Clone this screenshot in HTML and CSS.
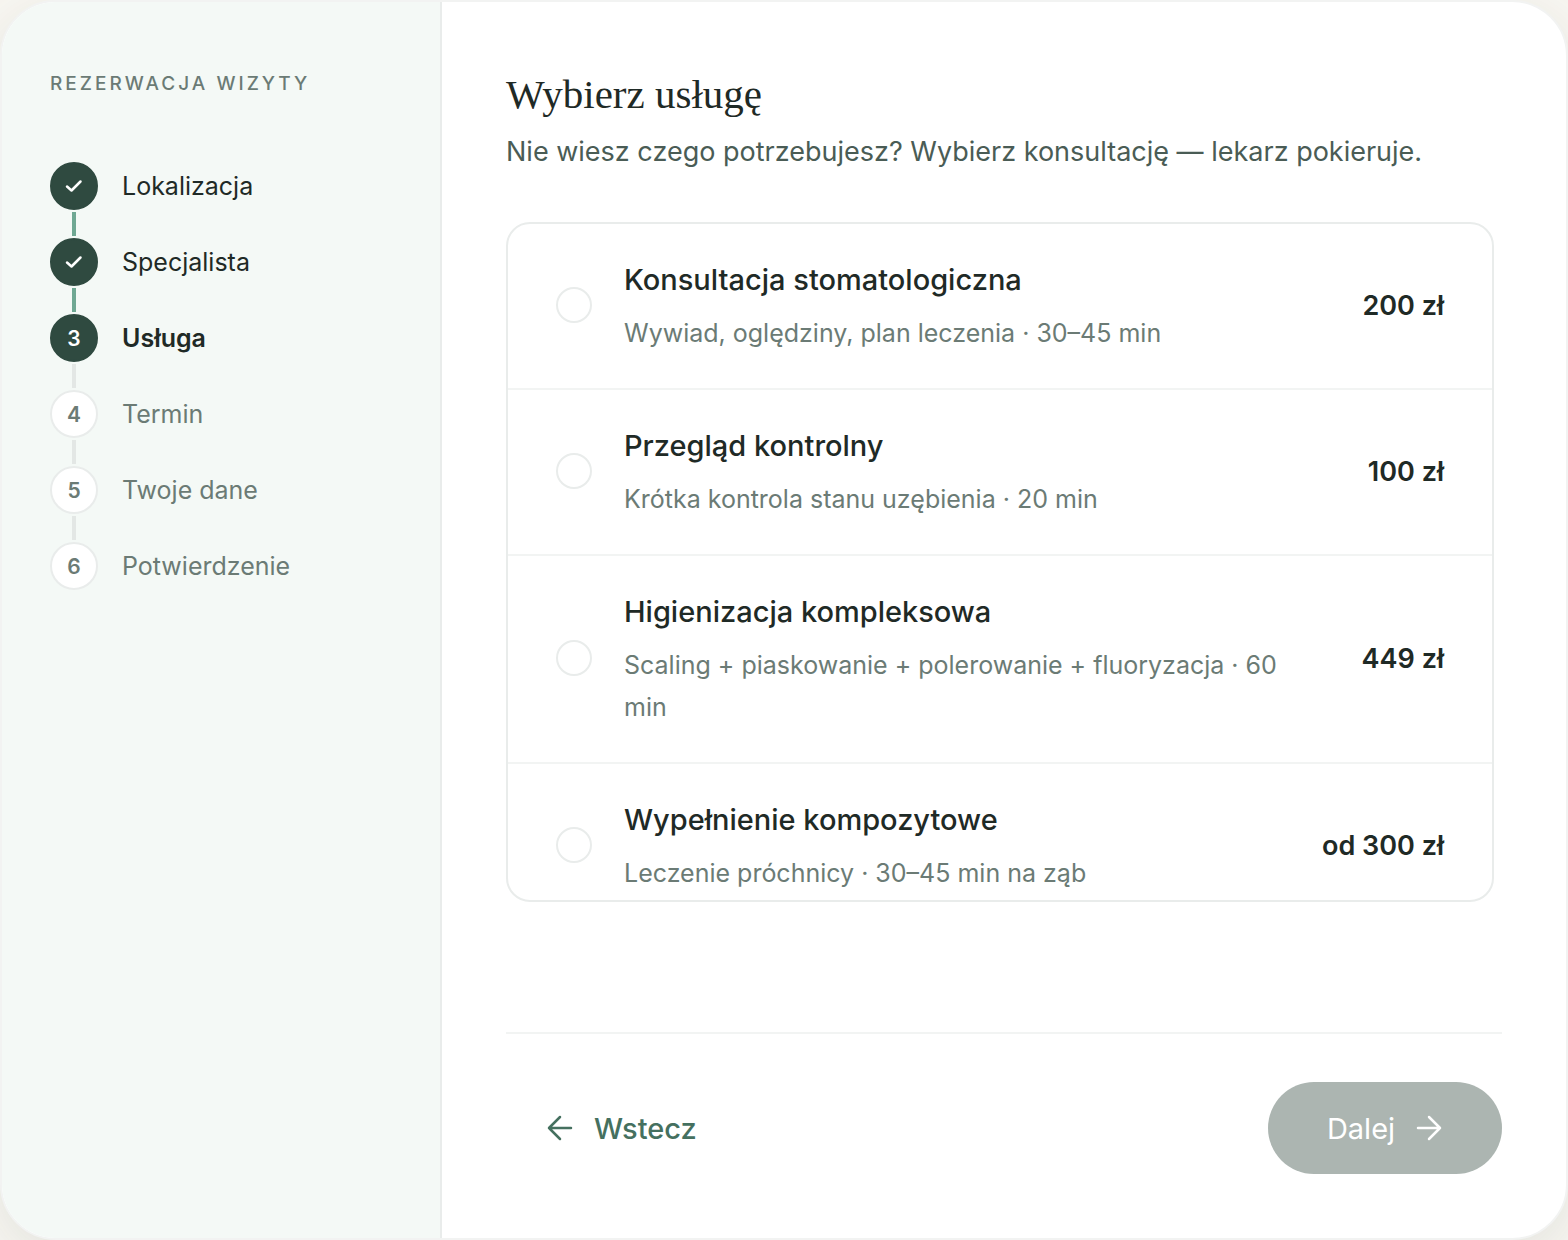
FILE: index.html
```html
<!DOCTYPE html>
<html lang="pl">
  <head>
    <meta charset="UTF-8" />
    <meta name="viewport" content="width=device-width, initial-scale=1.0" />
    <title>Rezerwacja wizyty</title>
    <link rel="stylesheet" href="styles.css">
  </head>
  <body>
    <div class="booking">
      <aside class="sidebar">
        <h1>Rezerwacja wizyty</h1>
        <ol class="steps">
          <li class="step done">
            <span class="dot">
              <svg width="24" height="24" viewBox="0 0 24 24"><path d="M5 12.5 9.5 16.5 18.5 7.5" /></svg>
            </span>
            <span class="label">Lokalizacja</span>
          </li>
          <li class="step done">
            <span class="dot">
              <svg width="24" height="24" viewBox="0 0 24 24"><path d="M5 12.5 9.5 16.5 18.5 7.5" /></svg>
            </span>
            <span class="label">Specjalista</span>
          </li>
          <li class="step active">
            <span class="dot">3</span>
            <span class="label">Usługa</span>
          </li>
          <li class="step">
            <span class="dot">4</span>
            <span class="label">Termin</span>
          </li>
          <li class="step">
            <span class="dot">5</span>
            <span class="label">Twoje dane</span>
          </li>
          <li class="step">
            <span class="dot">6</span>
            <span class="label">Potwierdzenie</span>
          </li>
        </ol>
      </aside>
      <form class="main">
        <h2>Wybierz usługę</h2>
        <p class="lead">Nie wiesz czego potrzebujesz? Wybierz konsultację — lekarz pokieruje.</p>
        <div class="services">
          <label class="service">
            <input type="radio" name="service" value="konsultacja" />
            <span class="info">
              <span class="name">Konsultacja stomatologiczna</span>
              <span class="desc">Wywiad, oględziny, plan leczenia · 30–45 min</span>
            </span>
            <span class="price">200 zł</span>
          </label>
          <label class="service">
            <input type="radio" name="service" value="przeglad" />
            <span class="info">
              <span class="name">Przegląd kontrolny</span>
              <span class="desc">Krótka kontrola stanu uzębienia · 20 min</span>
            </span>
            <span class="price">100 zł</span>
          </label>
          <label class="service">
            <input type="radio" name="service" value="higienizacja" />
            <span class="info">
              <span class="name">Higienizacja kompleksowa</span>
              <span class="desc">Scaling + piaskowanie + polerowanie + fluoryzacja · 60 min</span>
            </span>
            <span class="price">449 zł</span>
          </label>
          <label class="service">
            <input type="radio" name="service" value="wypelnienie" />
            <span class="info">
              <span class="name">Wypełnienie kompozytowe</span>
              <span class="desc">Leczenie próchnicy · 30–45 min na ząb</span>
            </span>
            <span class="price">od 300 zł</span>
          </label>
        </div>
        <div class="actions">
          <button type="button" class="back">
            <svg width="28" height="28" viewBox="0 0 28 28"><path d="M25 14H3M14 3 3 14 14 25" /></svg>
            Wstecz
          </button>
          <button type="submit" class="next" disabled>
            Dalej
            <svg width="28" height="28" viewBox="0 0 28 28"><path d="M3 14H25M14 3 25 14 14 25" /></svg>
          </button>
        </div>
      </form>
    </div>
  </body>
</html>
```
FILE: styles.css
```css
* {
  margin: 0;
  padding: 0;
  box-sizing: border-box;
}
body {
  background-color: #f9f7f2;
  font-family: Inter, "Liberation Sans", sans-serif;
  font-size: 25px;
  color: #1f2a26;
}
.booking {
  display: flex;
  min-height: 100vh;
  border: 2px solid #f2f3f2;
  border-radius: 56px;
  background-color: #fff;
  overflow: hidden;
  box-shadow: 0 16px 64px rgba(47, 74, 64, 0.12);
}
svg {
  fill: none;
  stroke: currentColor;
  stroke-width: 2.5;
  stroke-linecap: round;
  stroke-linejoin: round;
}

/* sidebar */
.sidebar {
  flex: none;
  width: 440px;
  padding: 64px 48px;
  border-right: 2px solid #e9eceb;
  background-color: #f4f9f6;
}
.sidebar h1 {
  margin-bottom: 60px;
  font-size: 19px;
  font-weight: 500;
  line-height: 36px;
  letter-spacing: 3px;
  text-transform: uppercase;
  color: #6b7b75;
}
.steps {
  list-style: none;
}
.step {
  position: relative;
  display: flex;
  align-items: center;
  gap: 24px;
  margin-bottom: 28px;
  color: #6b7b75;
}
/* line to the next step */
.step:not(:last-child)::after {
  content: "";
  position: absolute;
  top: 50px;
  left: 22px;
  width: 4px;
  height: 24px;
  background-color: #e3e7e5;
}
.step.done::after {
  background-color: #6fa893;
}
.dot {
  display: flex;
  align-items: center;
  justify-content: center;
  width: 48px;
  height: 48px;
  border: 2px solid #e9eceb;
  border-radius: 50%;
  background-color: #fff;
  font-size: 21px;
  font-weight: 600;
}
.done .dot,
.active .dot {
  border-color: #2f4a40;
  background-color: #2f4a40;
  color: #fff;
}
.done,
.active {
  color: #1f2a26;
}
.active .label {
  font-weight: 600;
}

/* service picker */
.main {
  flex: 1;
  display: flex;
  flex-direction: column;
  min-width: 0;
  padding: 64px;
}
h2 {
  margin-bottom: 8px;
  font-family: "Liberation Serif", serif;
  font-size: 41px;
  font-weight: 400;
  line-height: 56px;
}
.lead {
  margin-bottom: 48px;
  font-size: 27px;
  line-height: 44px;
  color: #4a5c55;
}
.services {
  max-height: 680px;
  margin-right: 8px;
  border: 2px solid #e9eceb;
  border-radius: 24px;
  overflow-y: auto;
  scrollbar-width: none;
}
.service {
  display: flex;
  align-items: center;
  gap: 32px;
  padding: 32px 48px 34px;
  border-bottom: 2px solid #f2f4f3;
  cursor: pointer;
}
.service:last-child {
  border-bottom: 0;
}
.service input {
  flex: none;
  appearance: none;
  width: 36px;
  height: 36px;
  border: 2px solid #e9eceb;
  border-radius: 50%;
}
.service input:checked {
  border: 10px solid #2f4a40;
}
.info {
  flex: 1;
}
.name,
.desc {
  display: block;
}
.name {
  margin-bottom: 8px;
  font-size: 29px;
  font-weight: 500;
  line-height: 48px;
}
.desc {
  line-height: 42px;
  color: #6b7b75;
}
.price {
  padding-left: 16px;
  font-size: 27px;
  font-weight: 600;
  white-space: nowrap;
}

/* bottom buttons */
.actions {
  display: flex;
  justify-content: space-between;
  margin-top: auto;
  padding-top: 48px;
  border-top: 2px solid #f2f4f3;
}
.actions button {
  display: flex;
  align-items: center;
  justify-content: center;
  gap: 20px;
  height: 92px;
  padding: 0 40px;
  border: 0;
  border-radius: 46px;
  background: none;
  font-family: inherit;
  font-size: 29px;
  font-weight: 500;
  color: #45705f;
  cursor: pointer;
}
.actions .next {
  min-width: 234px;
  background-color: #acb5b1;
  font-weight: 400;
  color: #fff;
  cursor: default;
}
```
